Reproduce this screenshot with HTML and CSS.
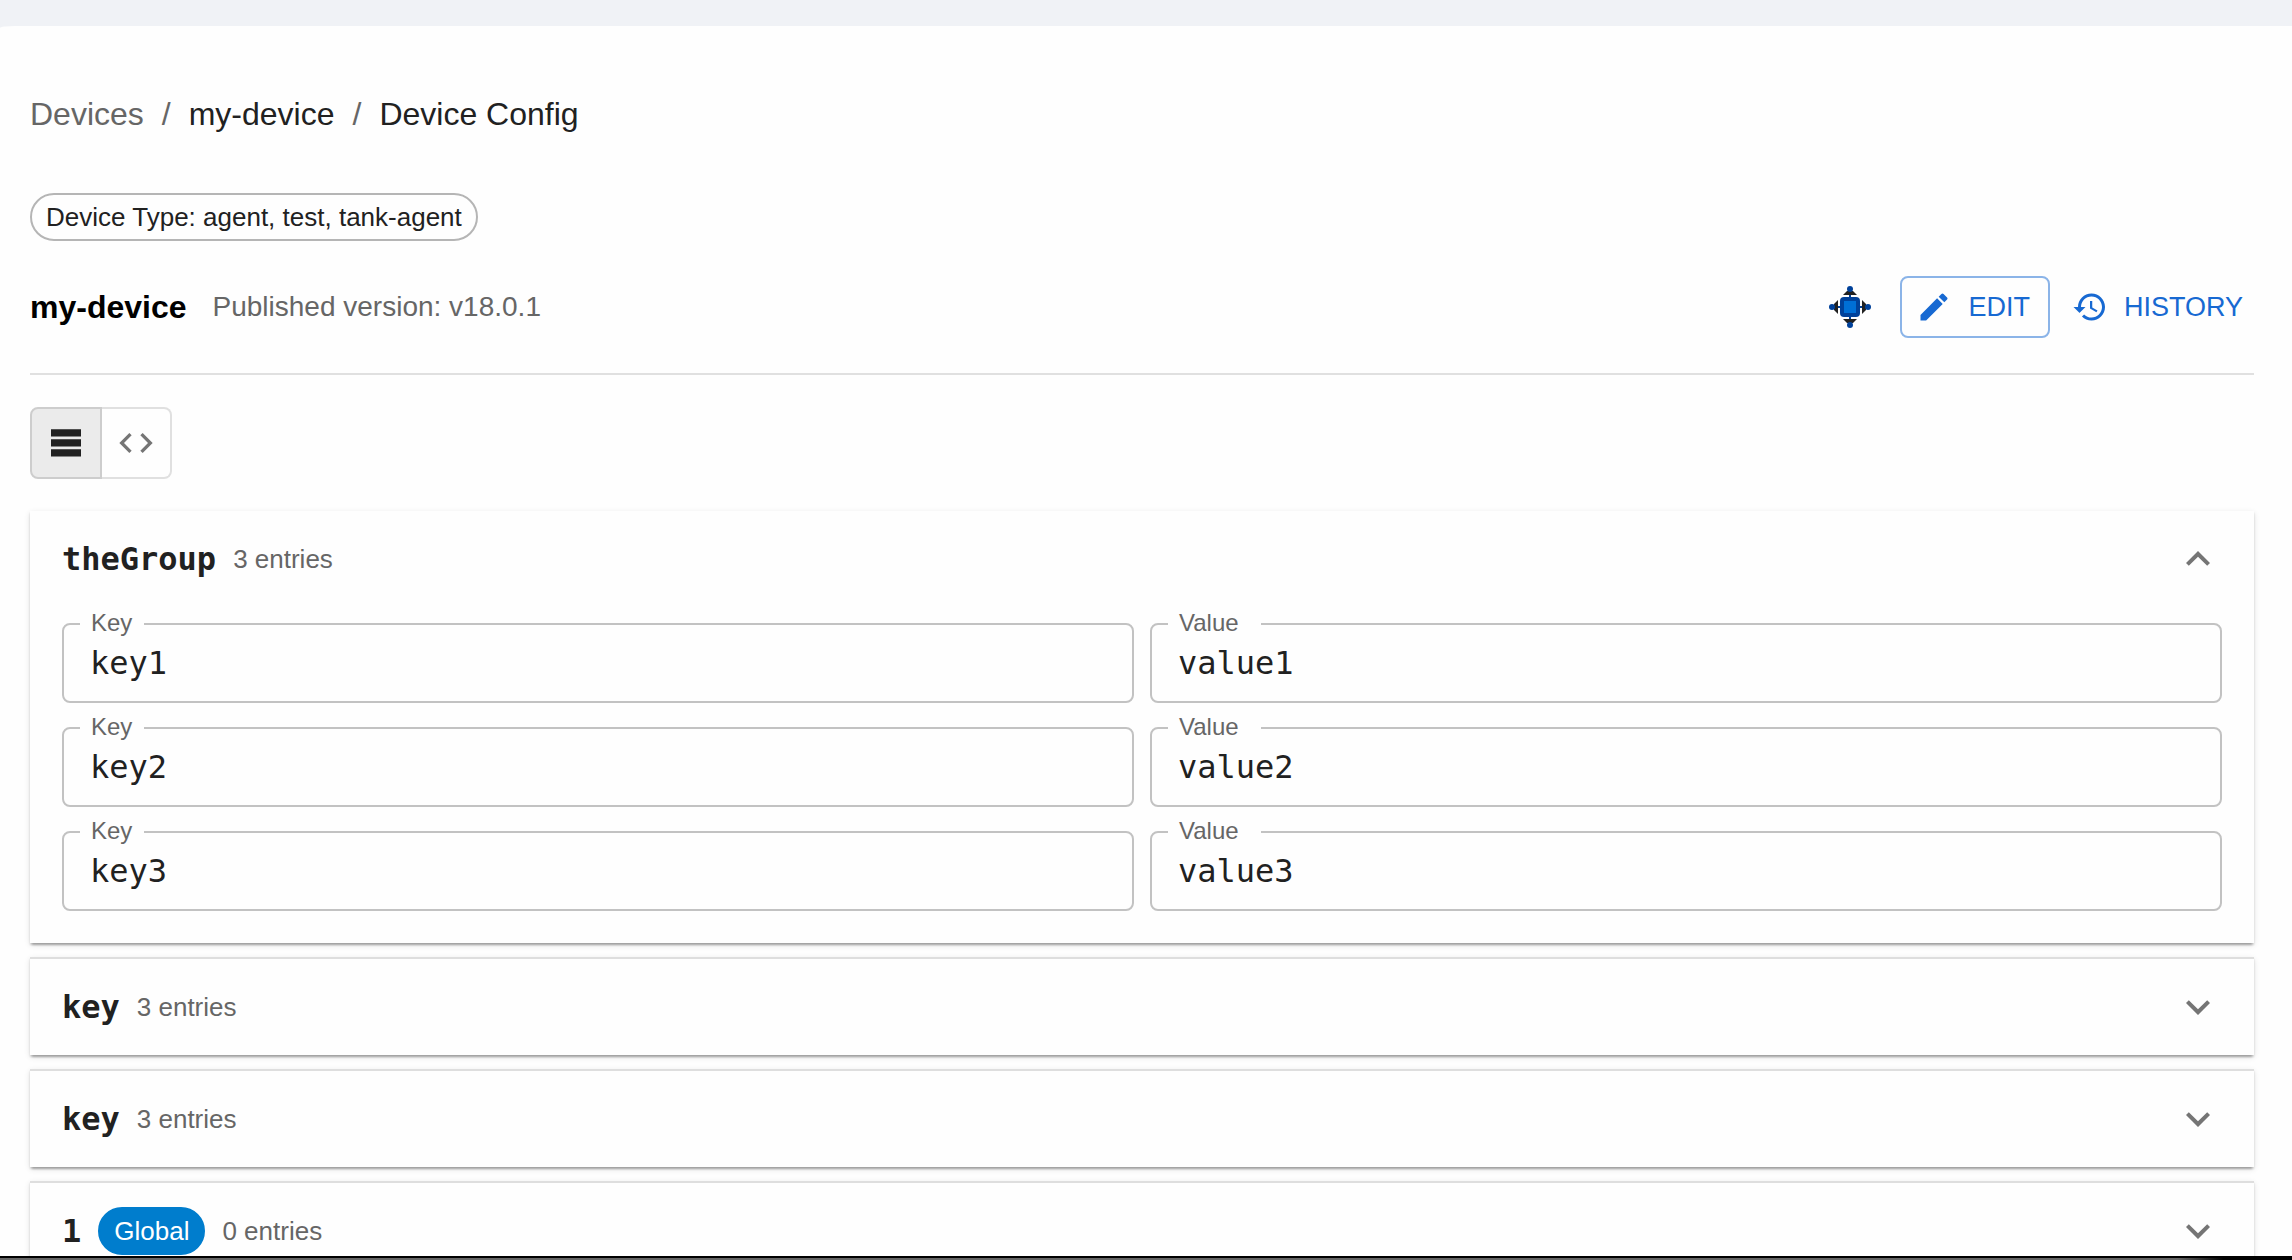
FILE: index.html
```
<!DOCTYPE html>
<html lang="en">
<head>
<meta charset="utf-8">
<title>Device Config</title>
<link rel="stylesheet" href="styles.css">
</head>
<body>

<main class="page">
  <nav class="breadcrumbs" aria-label="Breadcrumb">
    <a class="muted" href="#devices">Devices</a>
    <span class="slash">/</span>
    <a href="#my-device">my-device</a>
    <span class="slash">/</span>
    <span>Device Config</span>
  </nav>

  <div class="chips">
    <span class="chip">Device Type: agent, test, tank-agent</span>
  </div>

  <header class="device-header">
    <h1>my-device</h1>
    <span class="version">Published version: v18.0.1</span>
    <div class="actions">
      <svg class="node-icon" viewBox="0 0 42 42" aria-hidden="true">
        <path d="M18 5h6l4 4H14zM18 37h6l4-4H14zM5 18v6l4 4V14zM37 18v6l-4 4V14z"/>
        <path d="M21 9V33M9 21H33" stroke="#00419a" stroke-width="2"/>
        <g fill="#00419a">
          <circle cx="21" cy="3" r="3"/>
          <circle cx="21" cy="39" r="3"/>
          <circle cx="3" cy="21" r="3"/>
          <circle cx="39" cy="21" r="3"/>
          <rect x="11" y="11" width="20" height="20" rx="4"/>
        </g>
        <rect x="15" y="15" width="12" height="12" fill="#006fd6"/>
      </svg>
      <button class="btn btn-outlined">
        <svg viewBox="0 0 24 24" aria-hidden="true"><path d="M3 17.25V21h3.75L17.81 9.94l-3.75-3.75L3 17.25zM20.71 7.04c.39-.39.39-1.02 0-1.41l-2.34-2.34a.9959.9959 0 0 0-1.41 0l-1.83 1.83 3.75 3.75 1.83-1.83z"/></svg>
        EDIT
      </button>
      <button class="btn">
        <svg viewBox="0 0 24 24" aria-hidden="true"><path d="M13 3c-4.97 0-9 4.03-9 9H1l3.89 3.89.07.14L9 12H6c0-3.87 3.13-7 7-7s7 3.13 7 7-3.13 7-7 7c-1.93 0-3.68-.79-4.94-2.06l-1.42 1.42C8.27 19.99 10.51 21 13 21c4.97 0 9-4.03 9-9s-4.03-9-9-9zm-1 5v5l4.28 2.54.72-1.21-3.5-2.08V8H12z"/></svg>
        HISTORY
      </button>
    </div>
  </header>

  <div class="view-toggle">
    <button class="selected" aria-label="List view" aria-pressed="true">
      <svg viewBox="0 0 40 40"><path d="M5 6.3h30v7.2H5zM5 16.3h30v7.2H5zM5 26.3h30v7.2H5z"/></svg>
    </button>
    <button aria-label="Code view" aria-pressed="false">
      <svg viewBox="0 0 24 24"><path d="M9.4 16.6 4.8 12l4.6-4.6L8 6l-6 6 6 6 1.4-1.4zm5.2 0 4.6-4.6-4.6-4.6L16 6l6 6-6 6-1.4-1.4z"/></svg>
    </button>
  </div>

  <section class="group">
    <button class="group-header" aria-expanded="true">
      <span class="group-name">theGroup</span>
      <span class="count">3 entries</span>
      <svg class="chevron" viewBox="0 0 24 24" aria-hidden="true"><path d="m12 8-6 6 1.41 1.41L12 10.83l4.59 4.58L18 14z"/></svg>
    </button>
    <div class="entries">
      <fieldset>
        <legend><label for="key1">Key</label></legend>
        <input type="text" id="key1" value="key1" readonly>
      </fieldset>
      <fieldset class="value">
        <legend><label for="value1">Value</label></legend>
        <input type="text" id="value1" value="value1" readonly>
      </fieldset>
      <fieldset>
        <legend><label for="key2">Key</label></legend>
        <input type="text" id="key2" value="key2" readonly>
      </fieldset>
      <fieldset class="value">
        <legend><label for="value2">Value</label></legend>
        <input type="text" id="value2" value="value2" readonly>
      </fieldset>
      <fieldset>
        <legend><label for="key3">Key</label></legend>
        <input type="text" id="key3" value="key3" readonly>
      </fieldset>
      <fieldset class="value">
        <legend><label for="value3">Value</label></legend>
        <input type="text" id="value3" value="value3" readonly>
      </fieldset>
    </div>
  </section>

  <section class="group">
    <button class="group-header" aria-expanded="false">
      <span class="group-name">key</span>
      <span class="count">3 entries</span>
      <svg class="chevron" viewBox="0 0 24 24" aria-hidden="true"><path d="M16.59 8.59 12 13.17 7.41 8.59 6 10l6 6 6-6z"/></svg>
    </button>
  </section>

  <section class="group">
    <button class="group-header" aria-expanded="false">
      <span class="group-name">key</span>
      <span class="count">3 entries</span>
      <svg class="chevron" viewBox="0 0 24 24" aria-hidden="true"><path d="M16.59 8.59 12 13.17 7.41 8.59 6 10l6 6 6-6z"/></svg>
    </button>
  </section>

  <section class="group">
    <button class="group-header" aria-expanded="false">
      <span class="group-name">1</span>
      <span class="chip chip-global">Global</span>
      <span class="count">0 entries</span>
      <svg class="chevron" viewBox="0 0 24 24" aria-hidden="true"><path d="M16.59 8.59 12 13.17 7.41 8.59 6 10l6 6 6-6z"/></svg>
    </button>
  </section>
</main>
<div class="bottom-edge"></div>

</body>
</html>
```
FILE: styles.css
```
* {
  box-sizing: border-box;
}
body {
  margin: 0;
  height: 100vh;
  overflow: hidden;
  padding-top: 26px;
  background-color: #f0f2f6;
  color: #212121;
  font-family: "Liberation Sans", Arial, sans-serif;
  font-size: 32px;
}
button {
  font-family: inherit;
  color: inherit;
  cursor: pointer;
}
svg {
  display: block;
  fill: currentColor;
}
.page {
  min-height: 100%;
  padding: 64px 38px 0 30px;
  border-top-left-radius: 16px 2px;
  background-color: #fefefe;
}
.breadcrumbs {
  display: flex;
  gap: 18px;
  line-height: 48px;
}
.breadcrumbs a {
  color: inherit;
  text-decoration: none;
}
.breadcrumbs .muted,
.slash {
  color: #666;
}
.chips {
  display: flex;
  margin-top: 55px;
}
.chip {
  height: 48px;
  padding: 0 14px;
  border: 2px solid #b5b5b5;
  border-radius: 24px;
  font-size: 26px;
  line-height: 44px;
}
.chip-global {
  border-color: #007dcd;
  background-color: #007dcd;
  color: #fff;
}
.device-header {
  display: flex;
  align-items: center;
  gap: 26px;
  padding: 35px 0;
  border-bottom: 2px solid #e0e0e0;
}
h1 {
  margin: 0;
  font-size: 32px;
  color: #000;
}
.version {
  font-size: 28px;
  color: #666;
}
.actions {
  display: flex;
  align-items: center;
  margin-left: auto;
}
.node-icon {
  width: 42px;
  height: 42px;
  margin-right: 29px;
}
.btn {
  display: flex;
  align-items: center;
  gap: 16px;
  height: 62px;
  padding: 0 11px 0 22px;
  border: none;
  background: none;
  font-size: 27px;
  color: #1769d2;
}
.btn svg {
  width: 36px;
  height: 36px;
}
.btn-outlined {
  padding: 0 18px 0 14px;
  border: 2px solid #8bb4e8;
  border-radius: 8px;
}
.view-toggle {
  display: flex;
  margin: 32px 0;
}
.view-toggle button {
  padding: 14px;
  border: 2px solid #e0e0e0;
  border-left: none;
  border-radius: 0 8px 8px 0;
  background: none;
  color: #757575;
}
.view-toggle .selected {
  border: 2px solid #cdcdcd;
  border-radius: 8px 0 0 8px;
  background-color: #ebebeb;
  color: #212121;
}
.view-toggle svg {
  width: 40px;
  height: 40px;
}
.group {
  margin-bottom: 14px;
  background-color: #fefefe;
  box-shadow: 0 4px 2px -2px rgba(0, 0, 0, 0.2), 0 2px 2px rgba(0, 0, 0, 0.14), 0 2px 6px rgba(0, 0, 0, 0.12);
}
.group + .group {
  border-top: 2px solid #dedede;
}
.group-header {
  display: flex;
  align-items: center;
  gap: 17px;
  width: 100%;
  height: 96px;
  padding: 0 32px;
  border: none;
  background: none;
}
.group-name {
  font-family: "DejaVu Sans Mono", monospace;
  font-size: 32px;
  font-weight: bold;
}
.count {
  font-size: 26px;
  color: #666;
}
.chevron {
  width: 48px;
  height: 48px;
  margin-left: auto;
  color: #757575;
}
.entries {
  display: grid;
  grid-template-columns: 1fr 1fr;
  gap: 12px 16px;
  padding: 4px 32px 32px;
}
fieldset {
  min-width: 0;
  margin: 0;
  padding: 0 16px;
  border: 2px solid #c2c2c2;
  border-radius: 8px;
}
legend {
  padding: 0 12px 2px 11px;
  font-size: 24px;
  line-height: 24px;
  color: #666;
}
.value legend {
  padding-right: 22px;
}
input {
  display: block;
  width: 100%;
  height: 64px;
  padding: 0 10px 12px;
  border: none;
  outline: none;
  background: none;
  font-family: "DejaVu Sans Mono", monospace;
  font-size: 32px;
  color: #212121;
}
/* dark window edge along the bottom */
.bottom-edge {
  position: fixed;
  right: 0;
  bottom: 0;
  left: 0;
  height: 4px;
  border-top: 2px solid #000;
  background: linear-gradient(to right, #666 95%, #000 97%);
}
```
